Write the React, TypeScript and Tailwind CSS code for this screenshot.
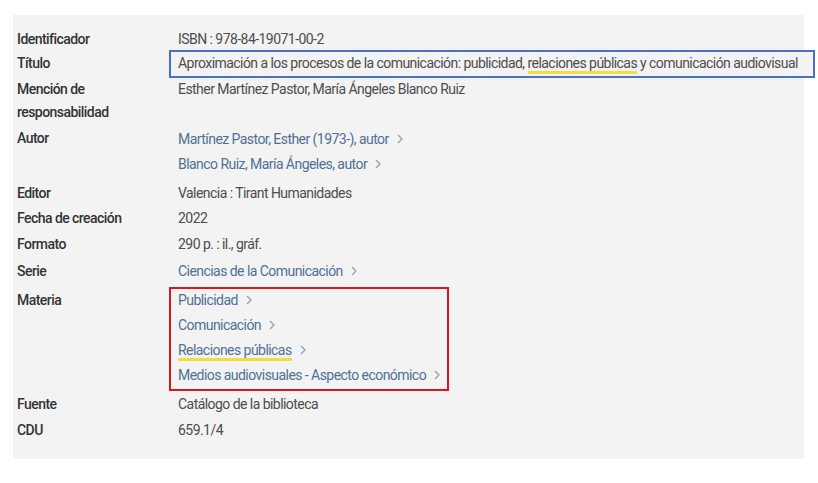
import React from "react";

const font = { fontFamily: '"Roboto", "Liberation Sans", sans-serif' };

function Chev() {
  return (
    <svg width="6" height="10" viewBox="0 0 6 10" className="inline-block ml-[8px] -mt-[2px] align-middle">
      <path d="M1 1 L5 5 L1 9" fill="none" stroke="#8e9db0" strokeWidth="1.2" />
    </svg>
  );
}

function Link({ children, hl }: { children: React.ReactNode; hl?: boolean }) {
  return (
    <div className="h-[25px] leading-[25px] text-[#4f7096] whitespace-nowrap">
      <span className={hl ? "border-b-[3px] border-[#f5dd3c]" : ""}>{children}</span>
      <Chev />
    </div>
  );
}

function Row({ label, children, cls = "", lh = "leading-[23px]" }: { label: React.ReactNode; children: React.ReactNode; cls?: string; lh?: string }) {
  return (
    <div className={"flex " + cls}>
      <div className={"w-[161px] shrink-0 text-[#333] font-medium " + lh}>{label}</div>
      <div className="flex-1 text-[#4d4d4d]">{children}</div>
    </div>
  );
}

export default function App() {
  return (
    <div className="w-[818px] h-[483px] bg-white pt-[15px] pl-[13px] overflow-hidden" style={font}>
      <div className="w-[791px] h-[444px] bg-[#f3f3f3] pt-[13px] pl-[4px] text-[14px] tracking-[-0.55px]">
        <Row label="Identificador">
          <div className="leading-[25px] h-[25px] -mt-[1px]">ISBN : 978-84-19071-00-2</div>
        </Row>
        <Row label="Título">
          <div className="relative z-10 -ml-[9px] w-[646px] h-[28px] border-2 border-[#4a72c0] pl-[7px] leading-[23px] whitespace-nowrap -mt-[2px] bg-[#f3f3f3]">
            Aproximación a los procesos de la comunicación: publicidad,{" "}
            <span className="border-b-[3px] border-[#f5dd3c]">relaciones públicas</span> y comunicación audiovisual
          </div>
        </Row>
        <Row label={<><div>Mención de</div><div>responsabilidad</div></>}>
          <div className="leading-[23px]">Esther Martínez Pastor, María Ángeles Blanco Ruiz</div>
        </Row>
        <Row label="Autor" cls="mt-[3px]" lh="leading-[25px] -mt-[1px]">
          <Link>Martínez Pastor, Esther (1973-), autor</Link>
          <Link>Blanco Ruiz, María Ángeles, autor</Link>
        </Row>
        <Row label="Editor" cls="mt-[5px]">
          <div className="leading-[23px]">Valencia : Tirant Humanidades</div>
        </Row>
        <Row label="Fecha de creación" cls="mt-[2px]">
          <div className="leading-[23px]">2022</div>
        </Row>
        <Row label="Formato" cls="mt-[3px]">
          <div className="leading-[23px]">290 p. : il., gráf.</div>
        </Row>
        <Row label="Serie" cls="mt-[3px]" lh="leading-[25px]">
          <Link>Ciencias de la Comunicación</Link>
        </Row>
        <Row label="Materia" cls="mt-[3px]" lh="leading-[25px] mt-[1px]">
          <div className="-ml-[9px] w-[280px] h-[104px] border-2 border-[#e0141b] pl-[7px]">
            <div className="-mt-[1px]">
              <Link>Publicidad</Link>
              <Link>Comunicación</Link>
              <Link hl>Relaciones públicas</Link>
              <Link>Medios audiovisuales - Aspecto económico</Link>
            </div>
          </div>
        </Row>
        <Row label="Fuente" cls="mt-[2px]">
          <div className="leading-[23px]">Catálogo de la biblioteca</div>
        </Row>
        <Row label="CDU" cls="mt-[3px]">
          <div className="leading-[23px]">659.1/4</div>
        </Row>
      </div>
    </div>
  );
}
